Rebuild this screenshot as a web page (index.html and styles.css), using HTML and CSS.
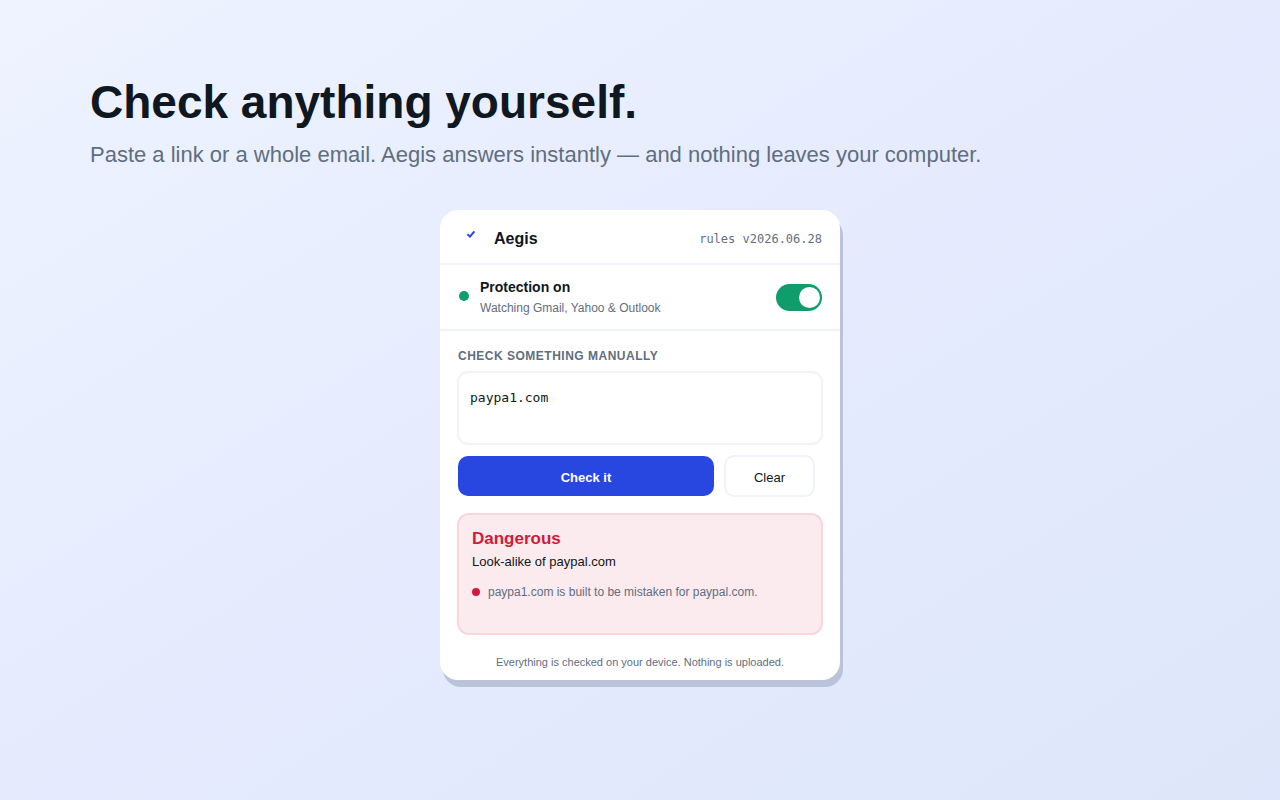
FILE: index.html
```html
<!DOCTYPE html>
<html lang="en">
<head>
  <meta charset="UTF-8">
  <meta name="viewport" content="width=device-width, initial-scale=1.0">
  <title>Aegis</title>
  <link rel="stylesheet" href="styles.css">
</head>
<body>
  <main class="page">
    <h1>Check anything yourself.</h1>
    <p class="subtitle">Paste a link or a whole email. Aegis answers instantly — and nothing leaves your computer.</p>

    <div class="popup">
      <header class="popup-header">
        <svg class="logo" width="26" height="26" viewBox="0 0 26 26" aria-hidden="true">
          <path d="M9.5 8.2 L12 10.6 L16.4 5.4" fill="none" stroke="#2846e0" stroke-width="2"/>
        </svg>
        <h2>Aegis</h2>
        <span class="rules">rules v2026.06.28</span>
      </header>

      <div class="protection">
        <span class="status-dot"></span>
        <label class="protection-text" for="protection-toggle">
          <span class="protection-title">Protection on</span>
          <span class="protection-sites">Watching Gmail, Yahoo &amp; Outlook</span>
        </label>
        <input class="toggle" type="checkbox" id="protection-toggle" checked>
      </div>

      <div class="manual">
        <label class="manual-label" for="check-input">CHECK SOMETHING MANUALLY</label>
        <textarea class="check-input" id="check-input" spellcheck="false">paypa1.com</textarea>
        <div class="actions">
          <button class="check-button" type="button">Check it</button>
          <button class="clear-button" type="button">Clear</button>
        </div>

        <section class="result">
          <h3>Dangerous</h3>
          <p class="summary">Look-alike of paypal.com</p>
          <ul class="reasons">
            <li>paypa1.com is built to be mistaken for paypal.com.</li>
          </ul>
        </section>

        <p class="privacy">Everything is checked on your device. Nothing is uploaded.</p>
      </div>
    </div>
  </main>
</body>
</html>
```
FILE: styles.css
```css
* {
    box-sizing: border-box;
}
body {
    margin: 0;
    min-height: 100vh;
    font-family: "Liberation Sans", Arial, sans-serif;
    color: #0f1720;
    background: linear-gradient(to bottom right, #eef3ff, #e5ebfd 50%, #dde6fa);
}
h1, h2, h3, p, ul {
    margin: 0;
    padding: 0;
}
.page {
    padding: 76px 90px 40px;
}
h1 {
    font-size: 46px;
    line-height: 52px;
}
.subtitle {
    margin-top: 14px;
    font-size: 22px;
    line-height: 26px;
    color: #5f6e80;
}
.popup {
    max-width: 400px;
    margin: 42px auto 0;
    background-color: #fff;
    border-radius: 18px;
    box-shadow: 3px 7px 0 #bac3d9;
}
.popup-header {
    display: flex;
    align-items: center;
    height: 55px;
    padding: 4px 18px 0;
    border-bottom: 2px solid #f0f3f8;
}
.logo {
    margin-right: 10px;
}
h2 {
    font-size: 16px;
    line-height: 20px;
}
.rules {
    margin-left: auto;
    font-family: "DejaVu Sans Mono", monospace;
    font-size: 12px;
    line-height: 18px;
    color: #5f6e80;
}
.protection {
    display: flex;
    align-items: center;
    height: 66px;
    padding: 0 18px;
    border-bottom: 2px solid #f0f3f8;
}
.status-dot {
    width: 10px;
    height: 10px;
    margin: 0 11px 2px 1px;
    border-radius: 50%;
    background-color: #0f9d6b;
}
.protection-text {
    flex: 1;
    display: flex;
    flex-direction: column;
}
.protection-title {
    font-size: 14px;
    font-weight: bold;
    line-height: 21px;
}
.protection-sites {
    font-size: 12px;
    line-height: 20px;
    color: #5f6e80;
}
.toggle {
    appearance: none;
    display: flex;
    align-items: center;
    justify-content: flex-end;
    width: 46px;
    height: 27px;
    margin: 0;
    padding: 0 2px;
    border-radius: 14px;
    background-color: #0f9d6b;
    cursor: pointer;
}
.toggle::before {
    content: "";
    width: 21px;
    height: 21px;
    border-radius: 50%;
    background-color: #fff;
}
.toggle:not(:checked) {
    justify-content: flex-start;
    background-color: #bac3d9;
}
.manual {
    display: flex;
    flex-direction: column;
    padding: 17px 17px 11px;
}
.manual-label {
    margin-left: 1px;
    font-size: 12px;
    font-weight: bold;
    line-height: 16px;
    letter-spacing: 0.5px;
    color: #5f6e80;
}
.check-input {
    height: 74px;
    margin-top: 7px;
    padding: 16px 11px;
    border: 2px solid #f0f3f8;
    border-radius: 11px;
    font-family: "DejaVu Sans Mono", monospace;
    font-size: 13px;
    line-height: 18px;
    color: #0f1720;
    resize: none;
}
.actions {
    display: flex;
    align-items: center;
    gap: 10px;
    margin: 10px 8px 16px 1px;
}
.actions button {
    padding: 2px 6px 0;
    font-family: inherit;
    font-size: 13px;
    border-radius: 10px;
    cursor: pointer;
}
.check-button {
    flex: 1;
    height: 40px;
    border: none;
    font-weight: bold;
    color: #fff;
    background-color: #2846e0;
}
.clear-button {
    width: 91px;
    height: 42px;
    border: 2px solid #f0f3f8;
    color: #0f1720;
    background-color: #fff;
}
.result {
    min-height: 122px;
    padding: 14px 13px;
    border: 2px solid #f9d6de;
    border-radius: 12px;
    background-color: #fbeaee;
}
h3 {
    font-size: 17px;
    line-height: 20px;
    color: #d11a3a;
}
.summary {
    margin-top: 3px;
    font-size: 13px;
    line-height: 20px;
}
.reasons {
    margin-top: 10px;
    list-style: none;
}
.reasons li {
    display: flex;
    align-items: center;
    gap: 8px;
    font-size: 12px;
    line-height: 20px;
    color: #5f6e80;
}
.reasons li::before {
    content: "";
    width: 8px;
    height: 8px;
    border-radius: 50%;
    background-color: #d11a3a;
}
.privacy {
    margin-top: 20px;
    font-size: 11px;
    line-height: 14px;
    text-align: center;
    color: #5f6e80;
}
```
